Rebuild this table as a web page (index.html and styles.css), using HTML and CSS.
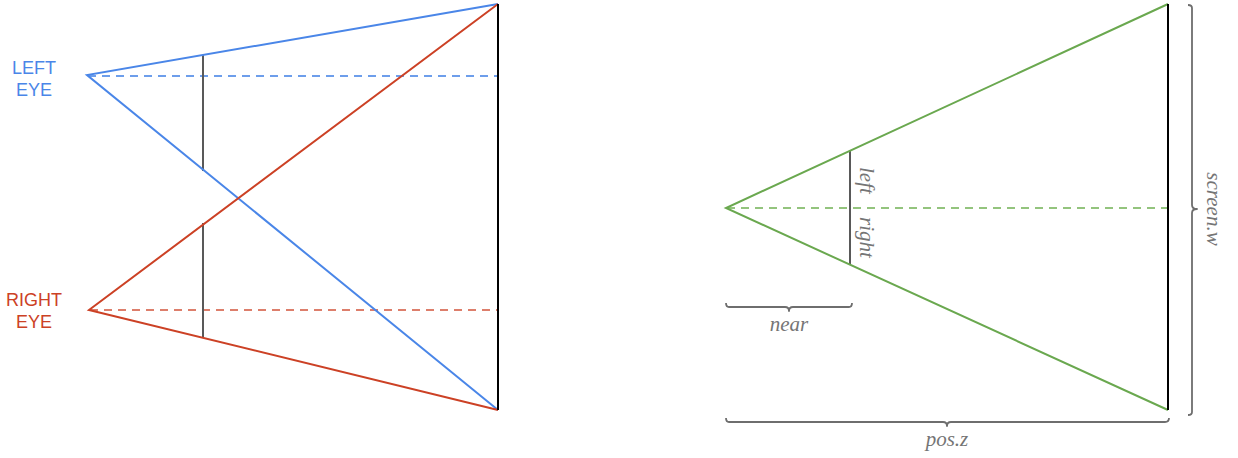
FILE: index.html
```html
<!DOCTYPE html>
<html lang="en">
<head>
<meta charset="utf-8">
<title>Stereo frustum diagram</title>
<link rel="stylesheet" href="styles.css">
</head>
<body>
<main class="figures">
  <svg class="panel panel-left" width="620" height="458" viewBox="0 0 620 458" xmlns="http://www.w3.org/2000/svg">
    <line class="dash dash-blue" x1="88" y1="76" x2="498" y2="76"/>
    <line class="dash dash-red" x1="90" y1="310" x2="498" y2="310"/>
    <line class="near-plane" x1="203" y1="55" x2="203" y2="171"/>
    <line class="near-plane" x1="203" y1="223" x2="203" y2="338"/>
    <polyline class="ray ray-blue" points="498,4 87,75 498,410"/>
    <polyline class="ray ray-red" points="498,4 89,310 498,410"/>
    <line class="screen" x1="498" y1="4" x2="498" y2="410"/>
    <text class="eye-label eye-left" x="34" y="74">LEFT</text>
    <text class="eye-label eye-left" x="34" y="96">EYE</text>
    <text class="eye-label eye-right" x="34" y="306">RIGHT</text>
    <text class="eye-label eye-right" x="34" y="328">EYE</text>
  </svg>
  <svg class="panel panel-right" width="618" height="458" viewBox="620 0 618 458" xmlns="http://www.w3.org/2000/svg">
    <line class="dash dash-green" x1="727" y1="208" x2="1168" y2="208"/>
    <line class="near-plane" x1="850" y1="150" x2="850" y2="264"/>
    <polyline class="ray ray-green" points="1168,4 726,208 1168,410"/>
    <line class="screen" x1="1168" y1="4" x2="1168" y2="410"/>
    <path class="bracket" d="M726,303 Q726,307 729,307 L785,307 Q789,307 789,311 Q789,307 793,307 L849,307 Q852,307 852,303"/>
    <path class="bracket" d="M726,418 Q726,422 729,422 L943,422 Q947,422 947,426 Q947,422 951,422 L1165,422 Q1169,422 1169,418"/>
    <path class="bracket" d="M1188,5 Q1192,5 1192,8 L1192,205 Q1192,209 1197,209 Q1192,209 1192,213 L1192,412 Q1192,415 1188,415"/>
    <text class="measure" x="789" y="331">near</text>
    <text class="measure" x="947" y="446">pos.z</text>
    <text class="measure measure-start" transform="translate(860 167) rotate(90)">left</text>
    <text class="measure measure-start" transform="translate(860 217) rotate(90)">right</text>
    <text class="measure" transform="translate(1207 209) rotate(90)">screen.w</text>
  </svg>
</main>
</body>
</html>
```

FILE: styles.css
```css
html, body {
  margin: 0;
  padding: 0;
  background: #ffffff;
}

.figures {
  display: flex;
  width: 1238px;
  height: 458px;
}

.panel {
  display: block;
  flex: none;
}

.ray,
.screen,
.near-plane,
.dash,
.bracket {
  fill: none;
  stroke-width: 2;
}

.ray-blue { stroke: #4a86e8; }
.ray-red { stroke: #cc4125; }
.ray-green { stroke: #6aa84f; }

.dash {
  stroke-width: 2;
  stroke-dasharray: 8 6;
}
.dash-blue { stroke: #6d9eeb; }
.dash-red { stroke: #dd7e6b; }
.dash-green { stroke: #93c47d; }

.screen {
  stroke: #000000;
}

.near-plane {
  stroke: #595959;
}

.bracket {
  stroke: #6e6e6e;
  stroke-width: 1.8;
  stroke-linejoin: round;
}

.eye-label {
  font-family: "Liberation Sans", Arial, sans-serif;
  font-size: 18px;
  text-anchor: middle;
}
.eye-left { fill: #4a86e8; }
.eye-right { fill: #cc4125; }

.measure {
  font-family: "Liberation Serif", "Times New Roman", serif;
  font-style: italic;
  font-size: 21px;
  fill: #757575;
  text-anchor: middle;
}
.measure-start {
  text-anchor: start;
}
```
